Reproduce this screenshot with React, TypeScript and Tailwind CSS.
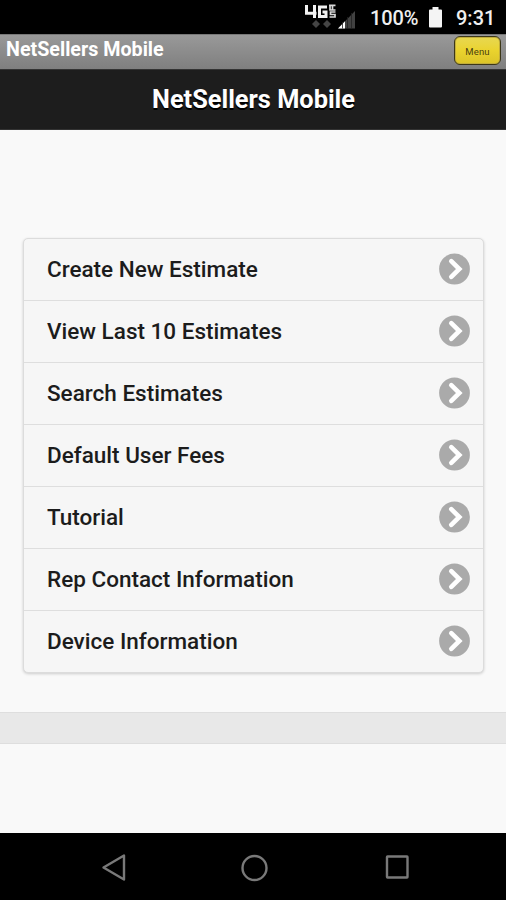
type TMenuItem = {
  label: string;
};

const MenuItems: TMenuItem[] = [
  { label: "Create New Estimate" },
  { label: "View Last 10 Estimates" },
  { label: "Search Estimates" },
  { label: "Default User Fees" },
  { label: "Tutorial" },
  { label: "Rep Contact Information" },
  { label: "Device Information" },
];

const SignalIcon = () => (
  <svg width="52" height="28" viewBox="0 0 52 28" className="shrink-0">
    <g fill="none" stroke="#f2f2f2" strokeWidth="3">
      <path d="M2.5 2v8.300h10M10.500 2v13" />
      <path d="M23 4h-7.500v9.500h6.500V9h-3.500" />
    </g>
    <g fill="none" stroke="#d8d8d8" strokeWidth="1.700">
      <path d="M25 2.300h6.500M26 2v5h5.500M28.500 3v3.500" />
      <path d="M31.500 9h-5v2.500h4.500v2.500h-5.500" />
    </g>
    <path d="M12 17l4 4-4 4-4-4zM23 17l4 4-4 4-4-4z" fill="#444" />
    <path d="M51 8v17.500H34z" fill="#414141" />
    <path d="M41 18.300v7.200h-7z" fill="#fff" />
    <path d="M38.500 19v6.500M43.500 14v11.500M47.500 10v15.500" stroke="#222" strokeWidth="0.8" />
  </svg>
);

const BatteryIcon = () => (
  <svg width="15" height="22" viewBox="0 0 15 22" className="shrink-0">
    <path d="M4.5 0h6v2.5H13q1 0 1 1v16q0 1-1 1H2q-1 0-1-1v-16q0-1 1-1h2.500z" fill="#f4f4f4" />
  </svg>
);

const ArrowIcon = () => (
  <svg width="32" height="32" viewBox="0 0 32 32" className="mt-[-1px] shrink-0">
    <circle cx="15.500" cy="16" r="15.400" fill="#aaa" />
    <path d="M12.300 8.200l8 7.800-8 7.800" fill="none" stroke="#fff" strokeWidth="4.600" strokeLinecap="round" />
  </svg>
);

function StatusBar() {
  return (
    <div className="flex h-[34px] items-center bg-black pl-[304px] text-[20px] font-medium leading-none text-[#efefef]">
      <SignalIcon />
      <span className="ml-[14px] w-[49px] whitespace-nowrap pt-px tracking-[-0.1px]">100%</span>
      <span className="ml-[9px] pt-[2px]">
        <BatteryIcon />
      </span>
      <span className="ml-[13px] whitespace-nowrap pt-px">9:31</span>
    </div>
  );
}

function TitleBar() {
  return (
    <div className="flex h-[35px] items-center justify-between border-t border-t-[#777] bg-linear-to-b from-[#999] to-[#7f7f7f] pl-[6px] pr-[5px]">
      <span className="pb-[4px] text-[19.700px] font-bold leading-none text-white">NetSellers Mobile</span>
      <button className="mt-[-3px] h-[29px] w-[47px] rounded-[6px] border border-[#3c3719] bg-linear-to-b from-[#e8d850] via-[#ead32e] to-[#dcc428] pt-[2px] text-[9.500px] leading-none tracking-[0.200px] text-[#4a410f] shadow-[inset_0_0_0_1px_#c2ad39]">
        Menu
      </button>
    </div>
  );
}

function SystemNav() {
  return (
    <div className="h-[67px] bg-black">
      <svg width="506" height="67" viewBox="0 0 506 67" fill="none" stroke="#797979" strokeWidth="2.400">
        <path d="M124 22.500v24L103.500 34.500z" strokeLinejoin="round" />
        <circle cx="254.500" cy="35" r="12" />
        <rect x="387" y="23.500" width="20.500" height="21" rx="0.500" />
      </svg>
    </div>
  );
}

function App() {
  return (
    <div className="flex h-[900px] w-[506px] flex-col overflow-hidden bg-[#f9f9f9] font-['Roboto','Liberation_Sans',sans-serif]">
      <StatusBar />
      <TitleBar />
      <header className="flex h-[61px] items-center justify-center border-y border-t-[#333] border-b-[#333] bg-[#1d1d1d]">
        <h1 className="pl-px text-[25.350px] font-bold leading-none text-white [text-shadow:0_2px_0_#000]">NetSellers Mobile</h1>
      </header>
      <main className="flex-1 pl-[23px] pr-[22px] pt-[108px]">
        <ul className="overflow-hidden rounded-[5px] border border-[#dcdcdc] bg-[#f6f6f6] shadow-[0_1px_3px_rgba(0,0,0,0.18)]">
          {MenuItems.map((item, i) => (
            <li
              key={i}
              className="flex h-[62px] items-center justify-between border-b border-b-[#dedede] pl-[23px] pr-[12px] last:h-[61px] last:border-b-0"
            >
              <span className="text-[22.500px] font-medium leading-none text-[#1c1c1c]">{item.label}</span>
              <ArrowIcon />
            </li>
          ))}
        </ul>
      </main>
      <footer className="mb-[89px] h-[32px] border-y border-[#dedede] bg-[#e8e8e8]" />
      <SystemNav />
    </div>
  );
}

export default App;
